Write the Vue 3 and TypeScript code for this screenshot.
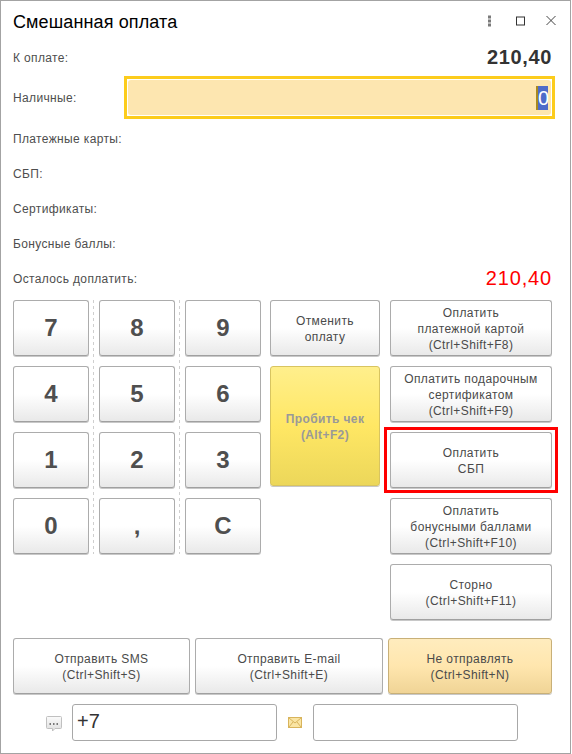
<template>
  <div class="window">
    <header class="title-bar">
      <h1 class="title">Смешанная оплата</h1>
      <div class="window-actions">
        <svg class="icon" width="16" height="16" viewBox="0 0 16 16">
          <rect x="6" y="0.5" width="3" height="3" fill="#7a7a7a" />
          <rect x="6" y="4.5" width="3" height="3" fill="#7a7a7a" />
          <rect x="6" y="8.5" width="3" height="3" fill="#7a7a7a" />
        </svg>
        <svg class="icon" width="16" height="16" viewBox="0 0 16 16">
          <rect x="3.5" y="2" width="8" height="8" fill="none" stroke="#333" />
        </svg>
        <svg class="icon" width="16" height="16" viewBox="0 0 16 16">
          <path d="M2.5 1 L11.5 10 M11.5 1 L2.5 10" stroke="#444" stroke-width="1" fill="none" />
        </svg>
      </div>
    </header>

    <div class="row row-total">
      <span class="label">К оплате:</span>
      <span class="sum">210,40</span>
    </div>

    <div class="row row-cash">
      <span class="label cash-label">Наличные:</span>
      <div class="cash-field">
        <div class="cash-inner"><span class="selected">0</span></div>
      </div>
    </div>

    <div v-for="name in payLabels" :key="name" class="row row-plain">
      <span class="label">{{ name }}</span>
    </div>

    <div class="row row-rest">
      <span class="label">Осталось доплатить:</span>
      <span class="sum sum-red">210,40</span>
    </div>

    <div class="pad">
      <div class="digits">
        <button v-for="key in digits" :key="key" class="btn digit">{{ key }}</button>
      </div>
      <div class="middle">
        <button class="btn action">Отменить<br />оплату</button>
        <button class="btn action primary">Пробить чек<br />(Alt+F2)</button>
      </div>
      <div class="pay-col">
        <button
          v-for="item in payButtons"
          :key="item.id"
          class="btn action"
          :class="{ marked: item.id === 'sbp' }"
        >
          <template v-for="(line, i) in item.lines" :key="i">
            <br v-if="i > 0" />{{ line }}
          </template>
        </button>
      </div>
    </div>

    <div class="send-row">
      <button class="btn action send-sms">Отправить SMS<br />(Ctrl+Shift+S)</button>
      <button class="btn action send-mail">Отправить E-mail<br />(Ctrl+Shift+E)</button>
      <button class="btn action send-none">Не отправлять<br />(Ctrl+Shift+N)</button>
    </div>

    <div class="contact-row">
      <svg class="contact-icon" width="18" height="18" viewBox="0 0 18 18">
        <defs>
          <linearGradient id="bubble" x1="0" y1="0" x2="0" y2="1">
            <stop offset="0" stop-color="#fbfbfb" />
            <stop offset="1" stop-color="#dedede" />
          </linearGradient>
        </defs>
        <path
          d="M2.5 2.5 H15.5 Q16.5 2.5 16.5 3.5 V13.5 Q16.5 14.5 15.5 14.5 H10 L7.5 17 V14.5 H2.5 Q1.5 14.5 1.5 13.5 V3.5 Q1.5 2.5 2.5 2.5 Z"
          fill="url(#bubble)"
          stroke="#c0c0c0"
        />
        <rect x="4.5" y="9" width="1.5" height="2" fill="#777" />
        <rect x="8" y="9" width="1.5" height="2" fill="#777" />
        <rect x="11.5" y="9" width="1.5" height="2" fill="#777" />
      </svg>
      <div class="field phone">+7</div>
      <svg class="contact-icon mail-icon" width="14" height="11" viewBox="0 0 14 11">
        <rect x="0.5" y="0.5" width="13" height="10" fill="#fae5a4" stroke="#d8b45c" />
        <path d="M1 1 L7 6 L13 1 M1 10 L5 5 M13 10 L9 5" fill="none" stroke="#d8b45c" />
      </svg>
      <div class="field email"></div>
    </div>
  </div>
</template>

<script setup lang="ts">
interface PayButton {
  id: string;
  lines: string[];
}

const payLabels: string[] = ['Платежные карты:', 'СБП:', 'Сертификаты:', 'Бонусные баллы:'];

const digits: string[] = ['7', '8', '9', '4', '5', '6', '1', '2', '3', '0', ',', 'C'];

const payButtons: PayButton[] = [
  { id: 'card', lines: ['Оплатить', 'платежной картой', '(Ctrl+Shift+F8)'] },
  { id: 'gift', lines: ['Оплатить подарочным', 'сертификатом', '(Ctrl+Shift+F9)'] },
  { id: 'sbp', lines: ['Оплатить', 'СБП'] },
  { id: 'bonus', lines: ['Оплатить', 'бонусными баллами', '(Ctrl+Shift+F10)'] },
  { id: 'storno', lines: ['Сторно', '(Ctrl+Shift+F11)'] }
];
</script>

<style>
html,
body {
  margin: 0;
  background: #fff;
}
</style>

<style scoped>
.window {
  box-sizing: border-box;
  width: 571px;
  height: 754px;
  border: 1px solid #a3a3a3;
  padding: 0 18px 0 12px;
  background: #fff;
  font-family: 'Liberation Sans', Arial, sans-serif;
  color: #4b4b4b;
}

.title-bar {
  display: flex;
  align-items: center;
  justify-content: space-between;
  height: 43px;
}

.title {
  margin: 0;
  font-size: 18px;
  font-weight: 400;
  letter-spacing: 0.12px;
  color: #000;
}

.window-actions {
  display: flex;
  gap: 15px;
  margin-right: -8px;
}

.row {
  display: flex;
  align-items: center;
  justify-content: space-between;
}

.label {
  font-size: 12px;
  letter-spacing: 0.36px;
  color: #4e4e4e;
}

.row-total {
  height: 27px;
}

.sum {
  font-size: 20px;
  font-weight: 700;
  letter-spacing: 0.65px;
  color: #333;
}

.sum-red {
  font-weight: 400;
  letter-spacing: 0.85px;
  color: #f00;
}

.row-cash {
  height: 43px;
  margin-top: 5px;
  margin-bottom: 2px;
}

.cash-field {
  box-sizing: border-box;
  width: 431px;
  height: 43px;
  margin-right: -3px;
  border: 3px solid #fccc1c;
  padding: 1px;
  background: #fff;
}

.cash-inner {
  display: flex;
  align-items: center;
  justify-content: flex-end;
  box-sizing: border-box;
  height: 100%;
  padding-right: 3px;
  border-radius: 3px;
  background: #fde6b0;
}

.selected {
  box-sizing: border-box;
  width: 12px;
  height: 24px;
  border-left: 2px solid #a88a20;
  background: #4f6bc9;
  font-size: 20px;
  line-height: 24px;
  text-align: center;
  color: #fff;
}

.row-plain,
.row-rest {
  height: 35px;
}

.pad {
  display: flex;
  gap: 10px;
  margin-top: 4px;
}

.digits {
  display: grid;
  align-self: flex-start;
  grid-template-columns: repeat(3, 76px);
  grid-auto-rows: 56px;
  gap: 10px;
  width: 247px;
  background-image:
    repeating-linear-gradient(to bottom, #cfcfcf 0 3px, transparent 3px 6px),
    repeating-linear-gradient(to bottom, #cfcfcf 0 3px, transparent 3px 6px);
  background-size: 1px 100%, 1px 100%;
  background-position: 80px 0, 166px 0;
  background-repeat: no-repeat;
}

.btn {
  box-sizing: border-box;
  margin: 0;
  padding: 0;
  border: 1px solid #acacac;
  border-bottom-color: #a0a0a0;
  border-radius: 3px;
  background: linear-gradient(to bottom, #fff 0%, #fff 50%, #e9e9e9 100%);
  box-shadow: 0 1px 0 #c8c8c8;
  font-family: inherit;
  text-align: center;
  cursor: pointer;
}

.digit {
  height: 56px;
  font-size: 24px;
  font-weight: 700;
  color: #4f4f4f;
}

.action {
  padding-top: 2px;
  font-size: 12px;
  line-height: 16px;
  letter-spacing: 0.4px;
  color: #4a4a4a;
}

.middle {
  display: flex;
  flex-direction: column;
  gap: 10px;
  width: 110px;
}

.middle .action {
  height: 56px;
}

.middle .primary {
  height: 120px;
  border-color: #d8c460;
  background: linear-gradient(to bottom, #ffef8c 0%, #ffe764 50%, #ecd75a 100%);
  font-weight: 700;
  color: #999;
}

.pay-col {
  display: flex;
  flex-direction: column;
  gap: 10px;
  width: 162px;
}

.pay-col .action {
  position: relative;
  height: 56px;
}

.marked::after {
  content: '';
  position: absolute;
  inset: -6px -7px;
  border: 3px solid #f00;
  pointer-events: none;
}

.send-row {
  display: flex;
  gap: 5px;
  margin-top: 18px;
}

.send-row .action {
  height: 56px;
}

.send-sms {
  width: 177px;
}

.send-mail {
  width: 188px;
}

.send-none {
  width: 164px;
  border-color: #c8b078;
  background: linear-gradient(to bottom, #ffecbe 0%, #ffe6ae 50%, #f0d496 100%);
}

.contact-row {
  display: flex;
  align-items: center;
  margin-top: 10px;
}

.contact-icon {
  flex: none;
  margin-left: 32px;
}

.mail-icon {
  margin-left: 11px;
}

.field {
  box-sizing: border-box;
  height: 37px;
  border: 1px solid #a8a8a8;
  border-radius: 3px;
  background: #fff;
}

.phone {
  width: 205px;
  margin-left: 9px;
  padding: 0 4px;
  font-size: 20px;
  line-height: 32px;
  color: #333;
}

.email {
  width: 205px;
  margin-left: 11px;
}
</style>
